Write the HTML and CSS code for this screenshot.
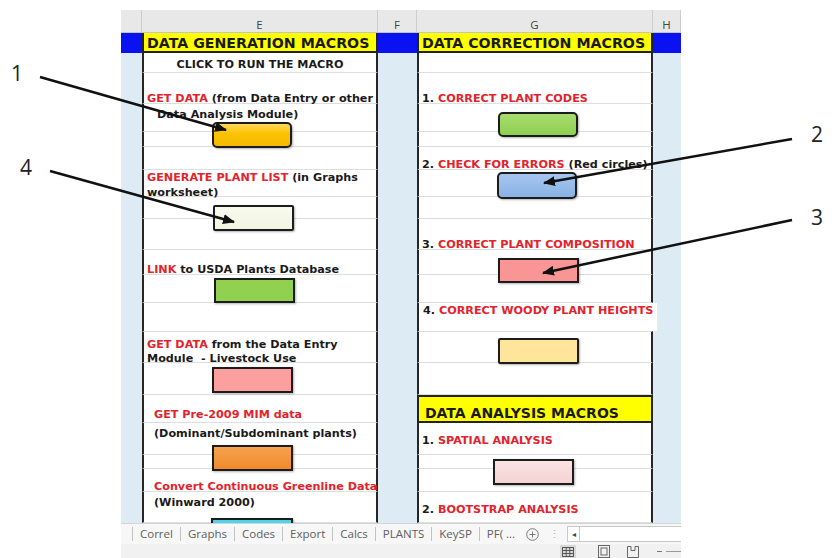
FILE: index.html
```html
<!DOCTYPE html>
<html lang="en">
<head>
    <meta charset="UTF-8">
    <meta name="viewport" content="width=device-width, initial-scale=1.0">
    <title>Macros</title>
    <link rel="stylesheet" href="styles.css">
</head>
<body>
<div class="page">
    <div class="workbook">
        <div class="sheet">
            <!-- column letters -->
            <div class="colhead"></div>
            <div class="colhead">E</div>
            <div class="colhead">F</div>
            <div class="colhead">G</div>
            <div class="colhead">H</div>

            <!-- title row -->
            <div class="band"></div>
            <div class="title">DATA GENERATION MACROS</div>
            <div class="band"></div>
            <div class="title">DATA CORRECTION MACROS</div>
            <div class="band"></div>

            <!-- light blue spacer columns -->
            <div class="column col-d"></div>
            <div class="column col-f"></div>
            <div class="column col-h"></div>

            <div class="cell mid center">CLICK TO RUN THE MACRO</div>
            <div class="cell"></div>

            <div class="cell bottom"><div><span class="red">GET DATA</span> (from Data Entry or other</div></div>
            <div class="cell bottom"><div>1. <span class="red">CORRECT PLANT CODES</span></div></div>

            <div class="cell top">
                <div class="indent first-line">Data Analysis Module)</div>
                <div class="macro rounded btn-get-data"></div>
            </div>
            <div class="cell top"><div class="macro rounded btn-codes"></div></div>

            <div class="cell"></div>
            <div class="cell"></div>

            <div class="cell"></div>
            <div class="cell bottom"><div>2. <span class="red">CHECK FOR ERRORS</span> (Red circles)</div></div>

            <div class="cell top two-lines raise">
                <div><span class="red">GENERATE PLANT LIST</span> (in Graphs</div>
                <div>worksheet)</div>
            </div>
            <div class="cell top"><div class="macro rounded btn-errors"></div></div>

            <div class="cell top"><div class="macro btn-plant-list"></div></div>
            <div class="cell"></div>

            <div class="cell"></div>
            <div class="cell bottom"><div>3. <span class="red">CORRECT PLANT COMPOSITION</span></div></div>

            <div class="cell bottom"><div><span class="red">LINK</span> to USDA Plants Database</div></div>
            <div class="cell top"><div class="macro btn-composition"></div></div>

            <div class="cell top"><div class="macro btn-usda"></div></div>
            <div class="cell"></div>

            <div class="cell"></div>
            <div class="cell top spill"><div class="spill-text">4. <span class="red">CORRECT WOODY PLANT HEIGHTS</span></div></div>

            <div class="cell top pad6 raise">
                <div><span class="red">GET DATA</span> from the Data Entry</div>
                <div>Module&nbsp; - Livestock Use</div>
            </div>
            <div class="cell top"><div class="macro btn-woody"></div></div>

            <div class="cell top"><div class="macro btn-livestock"></div></div>
            <div class="cell"></div>

            <div class="cell indent low"><div class="red">GET Pre-2009 MIM data</div></div>
            <div class="section">DATA ANALYSIS MACROS</div>

            <div class="cell top indent">
                <div class="first-line">(Dominant/Subdominant plants)</div>
                <div class="macro btn-mim"></div>
            </div>
            <div class="cell mid"><div>1. <span class="red">SPATIAL ANALYSIS</span></div></div>

            <div class="cell"></div>
            <div class="cell top"><div class="macro btn-spatial"></div></div>

            <div class="cell bottom indent"><div class="red">Convert Continuous Greenline Data</div></div>
            <div class="cell"></div>

            <div class="cell top indent">
                <div class="first-line">(Winward 2000)</div>
                <div class="macro btn-greenline"></div>
            </div>
            <div class="cell mid"><div>2. <span class="red">BOOTSTRAP ANALYSIS</span></div></div>
        </div>

        <div class="tabbar">
            <span class="tab">Correl</span>
            <span class="tab">Graphs</span>
            <span class="tab">Codes</span>
            <span class="tab">Export</span>
            <span class="tab">Calcs</span>
            <span class="tab">PLANTS</span>
            <span class="tab">KeySP</span>
            <span class="tab">PF( ...</span>
            <svg class="add-sheet" width="13" height="13" viewBox="0 0 13 13">
                <circle cx="6.5" cy="6.5" r="5.8" fill="none" stroke="#7a7a7a" stroke-width="1"/>
                <path d="M6.5 3.5v6M3.5 6.5h6" stroke="#7a7a7a" stroke-width="1"/>
            </svg>
            <span class="dots">⋮</span>
            <div class="hscroll"><span class="scroll-left">◂</span></div>
        </div>

        <div class="statusbar">
            <svg class="view-normal" width="16" height="14" viewBox="0 0 16 14">
                <rect x="0" y="0" width="16" height="14" fill="#d8d8d8"/>
                <rect x="2.5" y="2.5" width="11" height="9" fill="none" stroke="#555"/>
                <path d="M6.2 2.5v9M9.8 2.5v9M2.5 5.5h11M2.5 8.5h11" stroke="#555"/>
            </svg>
            <svg class="view-layout" width="12" height="13" viewBox="0 0 12 13">
                <rect x="0.5" y="0.5" width="11" height="12" fill="none" stroke="#666"/>
                <rect x="3" y="3" width="6" height="7" fill="none" stroke="#666"/>
            </svg>
            <svg class="view-break" width="12" height="12" viewBox="0 0 12 12">
                <path d="M0.5 0.5H4V4.5H8V0.5H11.5V11.5H0.5Z" fill="none" stroke="#666"/>
            </svg>
            <span class="zoom-minus"></span>
            <span class="zoom-track"></span>
        </div>
    </div>

    <svg class="notes" width="835" height="558" viewBox="0 0 835 558">
        <defs>
            <marker id="head" markerWidth="12" markerHeight="10" refX="11" refY="5" orient="auto" markerUnits="userSpaceOnUse">
                <path d="M0,0 L12,5 L0,10 z" fill="#111"/>
            </marker>
        </defs>
        <line x1="40" y1="77" x2="226" y2="130" stroke="#111" stroke-width="2.5" marker-end="url(#head)"/>
        <line x1="50" y1="171" x2="234" y2="222" stroke="#111" stroke-width="2.5" marker-end="url(#head)"/>
        <line x1="792" y1="139" x2="544" y2="183" stroke="#111" stroke-width="2.5" marker-end="url(#head)"/>
        <line x1="792" y1="220" x2="543" y2="273" stroke="#111" stroke-width="2.5" marker-end="url(#head)"/>
        <text x="11" y="81" class="note-num">1</text>
        <text x="20" y="175" class="note-num">4</text>
        <text x="811" y="142" class="note-num">2</text>
        <text x="811" y="225" class="note-num">3</text>
    </svg>
</div>
</body>
</html>
```

FILE: styles.css
```css
body {
    margin: 0;
    background-color: #fff;
    font-family: 'DejaVu Sans', Verdana, sans-serif;
    color: #1a1a1a;
}
.page {
    position: relative;
    width: 835px;
    height: 558px;
    overflow: hidden;
}
.workbook {
    width: 560px;
    margin-left: 121px;
    padding-top: 10px;
}

/* grid of the worksheet */
.sheet {
    display: grid;
    grid-template-columns: 21px 236px 39px 236px 28px;
    grid-template-rows: 23px 20px 20px 31px 28px 15px 23px 27px 22px 31px 25px 28px 29px 31px 32px 28px 32px 14px 23px 31px;
    height: 513px;
    overflow: hidden;
    font-size: 11.2px;
    font-weight: bold;
    line-height: 14px;
}
.sheet div {
    box-sizing: border-box;
}
.colhead {
    background-color: #e8e8e8;
    border-right: 1px solid #cdcdcd;
    border-bottom: 1px solid #c4c4c4;
    padding-top: 9px;
    font-family: 'Open Sans', 'Noto Sans', sans-serif;
    font-size: 11.5px;
    font-weight: normal;
    line-height: 12px;
    color: #444;
    text-align: center;
}
.band {
    background-color: #0a12f2;
}
.title {
    display: flex;
    align-items: center;
    padding: 1px 0 0 3px;
    background-color: #ffff00;
    border-left: 2px solid #222;
    border-right: 2px solid #222;
    border-bottom: 2px solid #222;
    font-size: 14.2px;
    white-space: nowrap;
}
.column {
    grid-row: 3 / -1;
    background-color: #dcebf4;
}
.col-d { grid-column: 1; }
.col-f { grid-column: 3; }
.col-h { grid-column: 5; }

/* cells in E and G */
.cell {
    display: flex;
    flex-direction: column;
    padding-left: 3px;
    background-color: #fff;
    border-left: 2px solid #262626;
    border-right: 2px solid #262626;
    border-bottom: 1px solid #dedede;
    white-space: nowrap;
    min-width: 0;
}
.cell.bottom { justify-content: flex-end; }
.cell.bottom > div { line-height: 8px; }
.cell.top { justify-content: flex-start; }
.cell.mid { justify-content: center; padding-top: 5px; }
.cell.center { align-items: center; padding-left: 0; }
.cell.low { justify-content: flex-end; padding-bottom: 3px; }
.cell.low > div { line-height: 8px; }
.cell.indent, .indent { padding-left: 10px; }
.cell.pad6 { padding-top: 6px; }
.two-lines { line-height: 15px; }
.raise {
    position: relative;
    z-index: 1;
}
.first-line { padding-top: 4px; }
.red {
    color: #e3232b;
}
.spill {
    padding-left: 0;
}
.spill-text {
    width: 238px;
    height: 28px;
    padding: 1px 0 0 4px;
    background-color: #fff;
}
.section {
    display: flex;
    flex-direction: column;
    justify-content: flex-end;
    padding: 0 0 2px 6px;
    background-color: #ffff00;
    border: 2px solid #222;
    font-size: 14px;
    line-height: 12px;
    white-space: nowrap;
}

/* macro buttons drawn over the grid */
.macro {
    position: relative;
    z-index: 2;
    flex-shrink: 0;
    align-self: flex-start;
    width: 81px;
    height: 26px;
    border: 2px solid #1c1c1c;
    box-shadow: 1px 1px 2px rgba(0, 0, 0, 0.3);
}
.rounded {
    border-radius: 5px;
}
.btn-get-data {
    width: 80px;
    margin: 0 0 0 65px;
    background: linear-gradient(#ffd85a, #fbc200 45%, #f5b900);
}
.btn-plant-list {
    margin: 8px 0 0 66px;
    border-radius: 2px;
    background: linear-gradient(#f8faee, #f1f5e0);
}
.btn-usda {
    height: 25px;
    margin: 3px 0 0 67px;
    background-color: #92d050;
}
.btn-livestock {
    margin: 4px 0 0 65px;
    background-color: #fe9f9f;
}
.btn-mim {
    margin: 4px 0 0 58px;
    background: linear-gradient(#f6a24f, #f08a2c);
}
.btn-greenline {
    width: 82px;
    margin: 8px 0 0 57px;
    background-color: #4dd4e8;
}
.btn-codes {
    width: 80px;
    height: 25px;
    margin: 8px 0 0 76px;
    background: linear-gradient(#a8dd6f, #8fcf52);
}
.btn-errors {
    width: 80px;
    height: 27px;
    margin: 2px 0 0 75px;
    background: linear-gradient(#a6c6ef, #8ab2e4);
}
.btn-composition {
    height: 25px;
    margin: 8px 0 0 76px;
    background-color: #f99595;
}
.btn-woody {
    margin: 6px 0 0 76px;
    border-radius: 2px;
    background-color: #ffe59b;
}
.btn-spatial {
    margin: 4px 0 0 71px;
    background: linear-gradient(#fbe3e3, #f5d2d2);
}

/* sheet tabs */
.tabbar {
    display: flex;
    align-items: center;
    height: 20px;
    padding-left: 11px;
    background-color: #f7f7f7;
    border-top: 1px solid #d4d4d4;
    font-family: 'Open Sans', 'Noto Sans', sans-serif;
    font-size: 11.5px;
    color: #606060;
}
.tab {
    padding: 0 7px;
    border-left: 1px solid #c2c2c2;
    line-height: 14px;
}
.add-sheet {
    margin-left: 4px;
}
.dots {
    margin-left: 10px;
    color: #b0b0b0;
    font-size: 11px;
    line-height: 14px;
}
.hscroll {
    display: flex;
    flex: 1;
    height: 14px;
    margin-left: 7px;
    background-color: #fff;
    border: 1px solid #c8c8c8;
    border-right: none;
}
.scroll-left {
    width: 11px;
    border-right: 1px solid #c8c8c8;
    font-size: 8px;
    line-height: 14px;
    text-align: center;
    color: #444;
}

/* status bar */
.statusbar {
    display: flex;
    justify-content: flex-end;
    align-items: center;
    height: 15px;
    background-color: #f1f1f1;
}
.view-layout { margin-left: 22px; }
.view-break { margin-left: 17px; }
.zoom-minus {
    width: 5px;
    height: 1px;
    margin-left: 18px;
    background-color: #777;
}
.zoom-track {
    width: 15px;
    height: 1px;
    margin-left: 4px;
    background-color: #999;
}

/* annotations */
.notes {
    position: absolute;
    top: 0;
    left: 0;
    z-index: 3;
    pointer-events: none;
}
.note-num {
    font-family: 'Open Sans', 'Liberation Sans', sans-serif;
    font-size: 21px;
    fill: #222;
}
```
